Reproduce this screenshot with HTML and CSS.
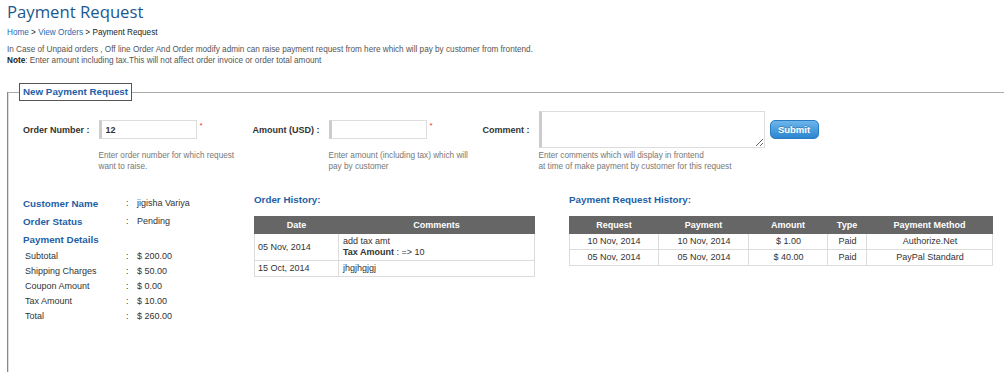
FILE: index.html
```html
<!DOCTYPE html>
<html lang="en">
<head>
  <meta charset="UTF-8" />
  <title>Payment Request</title>
  <link rel="stylesheet" href="styles.css">
</head>
<body>

<div class="page">

  <h1 class="page-title">Payment Request</h1>

  <div class="breadcrumb">
    <a href="#">Home</a> &gt; <a href="#">View Orders</a> &gt; Payment Request
  </div>

  <div class="intro">
    <p>In Case of Unpaid orders , Off line Order And Order modify admin can raise payment request from here which will pay by customer from frontend.</p>
    <p><b>Note</b>: Enter amount including tax.This will not affect order invoice or order total amount</p>
  </div>

  <fieldset class="panel">
    <legend>New Payment Request</legend>

    <div class="panel-body">

      <form class="request-form" onsubmit="return false;">
        <label class="field-label" for="orderNo">Order Number :</label>
        <input class="txt" type="text" id="orderNo" value="12">
        <span class="req">*</span>

        <label class="field-label" for="amount">Amount (USD) :</label>
        <input class="txt" type="text" id="amount">
        <span class="req">*</span>

        <label class="field-label" for="comment">Comment :</label>
        <textarea class="txt comment" id="comment"></textarea>
        <button class="btn-submit" type="submit">Submit</button>

        <div class="help help-1">Enter order number for which request<br>want to raise.</div>
        <div class="help help-2">Enter amount (including tax) which will<br>pay by customer</div>
        <div class="help help-3">Enter comments which will display in frontend<br>at time of make payment by customer for this request</div>
      </form>

      <div class="details">

        <div class="order-info">
          <div class="info-head">Customer Name</div><div class="sep">:</div><div class="val">jigisha Variya</div>
          <div class="info-head">Order Status</div><div class="sep">:</div><div class="val">Pending</div>
          <div class="info-head full">Payment Details</div>
          <div class="pay-label">Subtotal</div><div class="sep">:</div><div class="val">$ 200.00</div>
          <div class="pay-label">Shipping Charges</div><div class="sep">:</div><div class="val">$ 50.00</div>
          <div class="pay-label">Coupon Amount</div><div class="sep">:</div><div class="val">$ 0.00</div>
          <div class="pay-label">Tax Amount</div><div class="sep">:</div><div class="val">$ 10.00</div>
          <div class="pay-label">Total</div><div class="sep">:</div><div class="val">$ 260.00</div>
        </div>

        <div class="order-history">
          <h3 class="block-title">Order History:</h3>
          <table class="grid-table">
            <colgroup><col style="width:84px"><col></colgroup>
            <thead>
              <tr><th>Date</th><th>Comments</th></tr>
            </thead>
            <tbody>
              <tr><td>05 Nov, 2014</td><td>add tax amt<br><b>Tax Amount</b> : =&gt; 10</td></tr>
              <tr><td>15 Oct, 2014</td><td>jhgjhgjgj</td></tr>
            </tbody>
          </table>
        </div>

        <div class="request-history">
          <h3 class="block-title">Payment Request History:</h3>
          <table class="grid-table centered">
            <colgroup>
              <col style="width:89px"><col style="width:90px"><col style="width:79px"><col style="width:39px"><col>
            </colgroup>
            <thead>
              <tr><th>Request</th><th>Payment</th><th>Amount</th><th>Type</th><th>Payment Method</th></tr>
            </thead>
            <tbody>
              <tr><td>10 Nov, 2014</td><td>10 Nov, 2014</td><td>$ 1.00</td><td>Paid</td><td>Authorize.Net</td></tr>
              <tr><td>05 Nov, 2014</td><td>05 Nov, 2014</td><td>$ 40.00</td><td>Paid</td><td>PayPal Standard</td></tr>
            </tbody>
          </table>
        </div>

      </div>
    </div>
  </fieldset>

</div>

</body>
</html>
```

FILE: styles.css
```css
:root {
  --blue: #1e5fa8;
  --title: #1b5790;
  --text: #333;
  --muted: #777;
  --line: #dcdcdc;
}
* {
  box-sizing: border-box;
}
html, body {
  overflow: hidden;
}
body {
  margin: 0;
  font-family: "Liberation Sans", Arial, sans-serif;
  font-size: 9px;
  color: var(--text);
  background: #fff;
}
.page {
  padding: 0 0 0 7px;
  width: 1040px;
}
.page-title {
  margin: 0;
  font-family: "Open Sans", sans-serif;
  font-size: 16.7px;
  font-weight: normal;
  line-height: 24px;
  color: var(--title);
}
.breadcrumb {
  margin-top: 3px;
  font-size: 8.2px;
  line-height: 12px;
  color: #222;
}
.breadcrumb a {
  color: #2a68b0;
  text-decoration: none;
}
.intro {
  margin-top: 5px;
  font-size: 8.2px;
  line-height: 11px;
  color: #555;
}
.intro p {
  margin: 0;
}
.intro b {
  color: #222;
}

/* fieldset */
.panel {
  margin: 17px 0 0 0;
  padding: 10px 0 60px 10px;
  border: 1px solid #aaa;
  border-left: 2px groove #ddd;
  min-height: 300px;
}
.panel legend {
  padding: 0 3px;
  border: 1px solid #555;
  font-size: 9.8px;
  font-weight: bold;
  line-height: 16px;
  color: var(--blue);
}
.panel-body {
  padding-left: 4px;
}

/* form row */
.request-form {
  display: grid;
  grid-template-columns: auto 98px auto auto 98px auto auto 226px auto;
  grid-template-rows: 37px auto;
  justify-content: start;
  align-items: center;
}
.field-label {
  font-weight: bold;
  margin-right: 9px;
  white-space: nowrap;
}
.txt {
  height: 19px;
  width: 98px;
  padding: 0 4px;
  border: 1px solid #ddd;
  border-left: 3px solid #ccc;
  font-family: inherit;
  font-size: 9px;
  font-weight: bold;
  color: #333;
  outline: none;
}
.comment {
  width: 226px;
  height: 37px;
  resize: both;
}
.req {
  align-self: start;
  width: 4px;
  margin: 11px 49px 0 3px;
  color: #e33;
  font-size: 8px;
  line-height: 8px;
}
.btn-submit {
  margin-left: 5px;
  width: 49px;
  height: 19px;
  padding: 0;
  border: 1px solid #2c7cc2;
  border-radius: 5px;
  background: linear-gradient(#6bb5ec, #2c85d0);
  color: #fff;
  font-family: inherit;
  font-size: 9.5px;
  font-weight: bold;
  text-shadow: 0 -1px 0 rgba(0,0,0,0.25);
  cursor: pointer;
}
.help {
  grid-row: 2;
  align-self: start;
  margin-top: 2px;
  white-space: nowrap;
  font-size: 8.2px;
  line-height: 11px;
  color: var(--muted);
}
.help-1 { grid-column: 2; }
.help-2 { grid-column: 5; }
.help-3 { grid-column: 8; }

/* details */
.details {
  display: flex;
  margin-top: 22px;
}
.order-info {
  width: 231px;
  display: grid;
  grid-template-columns: 103px 11px auto;
  grid-template-rows: 18px 18px 18px repeat(5, 15px);
  align-items: center;
  align-content: start;
}
.info-head {
  font-size: 9.8px;
  font-weight: bold;
  color: var(--blue);
}
.info-head.full {
  grid-column: 1 / -1;
}
.pay-label {
  padding-left: 2px;
}
.order-history {
  width: 281px;
  margin-top: -1px;
}
.request-history {
  width: 424px;
  margin-left: 34px;
  margin-top: -1px;
}
.block-title {
  margin: 0 0 9px 0;
  font-size: 9.8px;
  line-height: 14px;
  color: var(--blue);
}
.grid-table {
  width: 100%;
  table-layout: fixed;
  border-collapse: collapse;
}
.grid-table th {
  background: #666;
  color: #fff;
  font-weight: bold;
  padding: 3px 4px 2px;
  line-height: 11px;
  border: 1px solid #666;
}
.grid-table td {
  padding: 2px 3px;
  line-height: 11px;
  border: 1px solid var(--line);
}
.grid-table td + td {
  padding-left: 4px;
}
.centered td {
  text-align: center;
}
```
